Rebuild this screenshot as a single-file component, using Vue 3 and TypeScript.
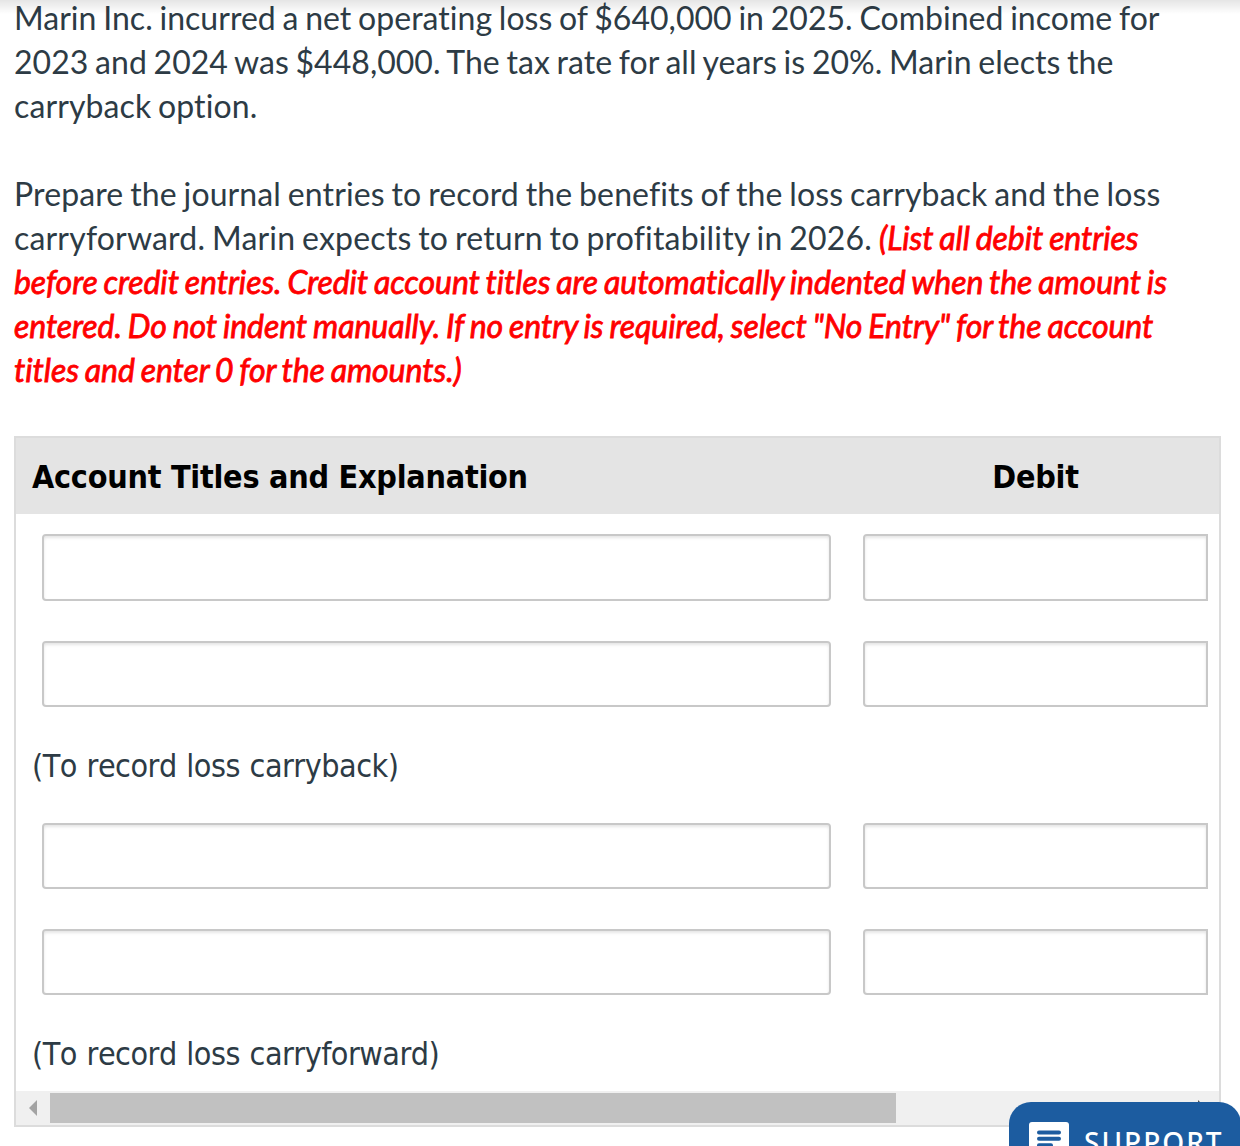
<template>
<div class="page">
  <main class="question">
    <p class="question__text question__text_facts">
      <span v-for="line in facts" :key="line" class="question__line">{{ line }}</span>
    </p>
    <p class="question__text question__text_task">
      <span class="question__line">Prepare the journal entries to record the benefits of the loss carryback and the loss</span>
      <span class="question__line">carryforward. Marin expects to return to profitability in 2026. <em class="question__hint">(List all debit entries</em></span>
      <em v-for="line in hints" :key="line" class="question__line question__hint">{{ line }}</em>
    </p>
    <section class="journal">
      <div class="journal__head">
        <span class="journal__title">Account Titles and Explanation</span>
        <span class="journal__debit">Debit</span>
      </div>
      <div v-for="entry in entries" :key="entry.note" class="journal__entry">
        <div v-for="(row, index) in entry.rows" :key="index" class="journal__row">
          <input v-model="row.account" class="journal__input" type="text" aria-label="Account title">
          <input v-model="row.debit" class="journal__input journal__input_debit" type="text" aria-label="Debit">
        </div>
        <div class="journal__note">{{ entry.note }}</div>
      </div>
      <div class="journal__scroll">
        <svg class="journal__arrow" width="34" height="34" viewBox="0 0 34 34"><path d="M21 9v16l-8-8z" fill="#a3a3a3"/></svg>
        <div class="journal__thumb"></div>
        <svg class="journal__arrow journal__arrow_right" width="34" height="34" viewBox="0 0 34 34"><path d="M13 9v16l8-8z" fill="#505050"/></svg>
      </div>
    </section>
  </main>
  <div class="page__shade"></div>
  <button class="support">
    <svg class="support__icon" width="40" height="40" viewBox="0 0 40 40">
      <rect width="40" height="40" rx="3" fill="#fff"/>
      <path d="M10 10.4h20M10 16.8h20M10 23.2h12" stroke="#1c5ca0" stroke-width="4" stroke-linecap="round"/>
    </svg>
    <span class="support__label">SUPPORT</span>
  </button>
</div>
</template>

<script setup lang="ts">
import { ref } from 'vue';

interface Row {
  account: string;
  debit: string;
}
interface Entry {
  note: string;
  rows: Row[];
}
const facts: string[] = [
  'Marin Inc. incurred a net operating loss of $640,000 in 2025. Combined income for',
  '2023 and 2024 was $448,000. The tax rate for all years is 20%. Marin elects the',
  'carryback option.',
];
const hints: string[] = [
  'before credit entries. Credit account titles are automatically indented when the amount is',
  'entered. Do not indent manually. If no entry is required, select "No Entry" for the account',
  'titles and enter 0 for the amounts.)',
];
const emptyRows = (): Row[] => [{ account: '', debit: '' }, { account: '', debit: '' }];
const entries = ref<Entry[]>([
  { note: '(To record loss carryback)', rows: emptyRows() },
  { note: '(To record loss carryforward)', rows: emptyRows() },
]);
</script>

<style>
body{
  margin: 0;
  background: #fff;
}
</style>

<style scoped>
.page{
  position: relative;
  width: 1240px;
  height: 1146px;
  overflow: hidden;
  background: #fff;
  color: #2d3b45;
  font-family: Lato, sans-serif;
}
.page__shade{
  position: absolute;
  top: 0;
  left: 0;
  width: 100%;
  height: 14px;
  background: linear-gradient(rgba(0, 0, 0, 0.1), rgba(0, 0, 0, 0));
}
.question{
  box-sizing: border-box;
  height: 1127px;
  margin-top: -4px;
  padding: 0 19px 0 14px;
}
.question__text{
  margin: 0 0 44px;
  font-size: 32px;
  line-height: 44px;
  letter-spacing: 0.03px;
  word-spacing: -1.5px;
  font-variant-ligatures: none;
}
.question__text_facts .question__line:nth-child(3){
  letter-spacing: 0.1px;
}
.question__text_task .question__line:nth-child(1){
  letter-spacing: 0.12px;
}
.question__text_task .question__line:nth-child(2){
  letter-spacing: 0.18px;
}
.question__line{
  display: block;
  white-space: pre;
}
.question__hint{
  color: #f00;
  font-style: italic;
  letter-spacing: -0.08px;
  -webkit-text-stroke: 0.8px #f00;
}
.journal{
  box-sizing: border-box;
  height: 691px;
  margin-top: 44px;
  border: 2px solid #dcdcdc;
  font-family: "DejaVu Sans Condensed", "DejaVu Sans", sans-serif;
  font-stretch: condensed;
  font-size: 32px;
  font-kerning: none;
}
.journal__head{
  box-sizing: border-box;
  display: flex;
  align-items: center;
  height: 76px;
  padding: 2px 0 0 16px;
  background: #e4e4e4;
  color: #000;
  font-weight: bold;
  letter-spacing: -0.25px;
}
.journal__title{
  flex: none;
  width: 831px;
}
.journal__debit{
  flex: none;
  width: 345px;
  text-align: center;
}
.journal__entry{
  height: 289px;
}
.journal__entry + .journal__entry{
  height: 288px;
}
.journal__row{
  display: flex;
  gap: 32px;
  padding: 20px 0 20px 26px;
}
.journal__input{
  box-sizing: border-box;
  width: 789px;
  height: 66px;
  margin: 0;
  border: 2px solid #c8c8c8;
  border-radius: 4px;
  outline: none;
  background: #fff;
  box-shadow: inset 0 2px 3px rgba(0, 0, 0, 0.1);
  font: inherit;
}
.journal__input_debit{
  width: 345px;
  border-radius: 4px 0 0 4px;
}
.journal__entry:nth-child(2) .journal__row:first-child .journal__input{
  height: 67px;
}
.journal__note{
  padding-left: 16px;
  line-height: 78px;
  letter-spacing: -0.5px;
  word-spacing: 1px;
}
.journal__scroll{
  display: flex;
  align-items: center;
  height: 34px;
  background: #f0f0f0;
}
.journal__arrow{
  flex: none;
}
.journal__arrow_right{
  margin-left: auto;
}
.journal__thumb{
  width: 846px;
  height: 30px;
  background: #c1c1c1;
}
.support{
  position: absolute;
  top: 1102px;
  left: 1009px;
  display: flex;
  align-items: center;
  gap: 15px;
  width: 232px;
  height: 80px;
  padding: 0 0 0 20px;
  border: none;
  border-radius: 22px;
  background: #1c5ca0;
  color: #fff;
}
.support__icon{
  flex: none;
}
.support__label{
  font-family: "Noto Sans", sans-serif;
  font-size: 28px;
  font-weight: 500;
  line-height: 40px;
  letter-spacing: 2px;
}
</style>
